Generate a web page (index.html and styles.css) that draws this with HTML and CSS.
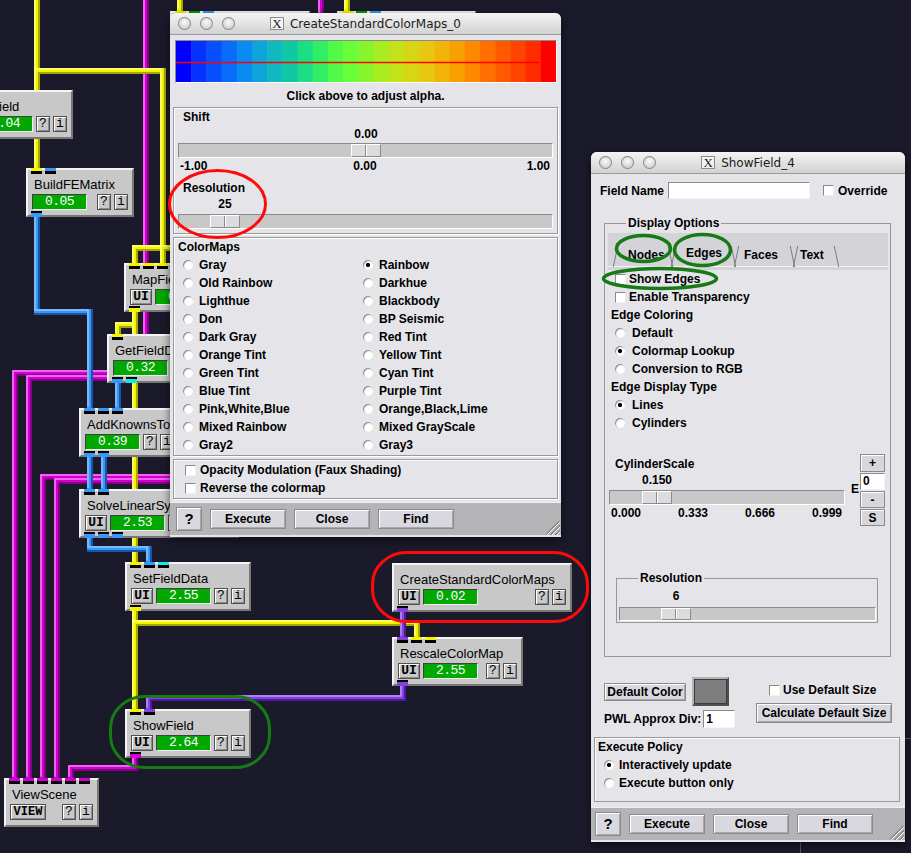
FILE: index.html
```html
<!DOCTYPE html>
<html lang="en">
<head>
<meta charset="utf-8">
<title>SCIRun network</title>
<link rel="stylesheet" href="styles.css">
</head>
<body>
<div class="desk">
<svg class="wires" width="911" height="853" viewBox="0 0 911 853">
  <defs>
    <g id="wm"><path d="M146 0V373H15V778"/><path d="M176 378H29V778"/><path d="M176 477H43V778"/><path d="M176 481H57V778"/><path d="M135 758V768H71V778"/><path d="M321 0V14"/></g>
    <g id="wy"><path d="M37 0V168"/><path d="M37 71H163V264"/><path d="M176 248H135V264"/><path d="M135 313V562"/><path d="M135 325H118V334"/><path d="M135 611V709"/><path d="M135 623H417V637"/><path d="M180 0V11"/><path d="M347 0V11"/></g>
    <g id="wb"><path d="M37 217V312H90V408"/><path d="M118 383V408"/><path d="M90 458V489"/><path d="M104 458V489"/><path d="M90 538V549H149V562"/></g>
    <g id="wp"><path d="M403 612V637"/><path d="M403 686V698H149V709"/></g>
  </defs>
  <g fill="none" stroke-linecap="square" stroke-linejoin="miter">
    <use href="#wm" stroke="#860086" stroke-width="6"/>
    <use href="#wm" stroke="#d000d0" stroke-width="4" transform="translate(-1 -1)"/>
    <use href="#wm" stroke="#ff80ff" stroke-width="1.5" transform="translate(-2 -2)"/>
    <use href="#wy" stroke="#a8a800" stroke-width="6"/>
    <use href="#wy" stroke="#f4f400" stroke-width="4" transform="translate(-1 -1)"/>
    <use href="#wy" stroke="#ffff80" stroke-width="1.5" transform="translate(-2 -2)"/>
    <use href="#wb" stroke="#1358b0" stroke-width="6"/>
    <use href="#wb" stroke="#3a98f4" stroke-width="4" transform="translate(-1 -1)"/>
    <use href="#wb" stroke="#8cc6ff" stroke-width="1.5" transform="translate(-2 -2)"/>
    <use href="#wp" stroke="#5018a0" stroke-width="6"/>
    <use href="#wp" stroke="#8444dc" stroke-width="4" transform="translate(-1 -1)"/>
    <use href="#wp" stroke="#b892ff" stroke-width="1.5" transform="translate(-2 -2)"/>
  </g>
</svg>

<div class="bgwin"></div>

<div class="mod m-top1"><i class="port in pa py"></i><i class="port in pb pg"></i><i class="port in pc pbl"></i></div>
<div class="mod m-top2"><i class="port in pa py"></i><i class="port in pb pg"></i><i class="port in pc pbl"></i></div>

<div class="mod m-read">
  <div class="mname">ReadField</div>
  <div class="mrow"><span class="ui">UI</span><span class="stat">0.04</span><span class="q">?</span><span class="info">i</span></div>
</div>

<div class="mod m-build">
  <div class="mname">BuildFEMatrix</div>
  <div class="mrow"><span class="stat">0.05</span><span class="q push">?</span><span class="info">i</span></div>
  <i class="port in pa py"></i><i class="port in pb pbl"></i>
  <i class="port out pa obl"></i>
</div>

<div class="mod m-map">
  <div class="mname">MapFieldData</div>
  <div class="mrow"><span class="ui">UI</span><span class="stat">0.09</span><span class="q">?</span><span class="info">i</span></div>
  <i class="port in pa py"></i><i class="port in pb py"></i><i class="port in pc py"></i>
  <i class="port out pa oy"></i>
</div>

<div class="mod m-get">
  <div class="mname">GetFieldData</div>
  <div class="mrow"><span class="stat">0.32</span><span class="q">?</span><span class="info">i</span></div>
  <i class="port in pa py"></i>
  <i class="port out pa obl"></i><i class="port out pb ocy"></i>
</div>

<div class="mod m-add">
  <div class="mname">AddKnownsToLinearSystem</div>
  <div class="mrow"><span class="stat">0.39</span><span class="q">?</span><span class="info">i</span></div>
  <i class="port in pa pbl"></i><i class="port in pb pbl"></i><i class="port in pc pbl"></i>
  <i class="port out pa obl"></i><i class="port out pb obl"></i>
</div>

<div class="mod m-solve">
  <div class="mname">SolveLinearSystem</div>
  <div class="mrow"><span class="ui">UI</span><span class="stat">2.53</span><span class="q">?</span><span class="info">i</span></div>
  <i class="port in pa pbl"></i><i class="port in pb pbl"></i>
  <i class="port out pa obl"></i><i class="port out pb obl"></i><i class="port out pc obl"></i>
</div>

<div class="mod m-set">
  <div class="mname">SetFieldData</div>
  <div class="mrow"><span class="ui">UI</span><span class="stat">2.55</span><span class="q">?</span><span class="info">i</span></div>
  <i class="port in pa py"></i><i class="port in pb pbl"></i><i class="port in pc pcy"></i>
  <i class="port out pa oy"></i>
</div>

<div class="mod m-show">
  <div class="mname">ShowField</div>
  <div class="mrow"><span class="ui">UI</span><span class="stat">2.64</span><span class="q">?</span><span class="info">i</span></div>
  <i class="port in pa py"></i><i class="port in pb pp"></i>
  <i class="port out pa om"></i>
</div>

<div class="mod m-view">
  <div class="mname">ViewScene</div>
  <div class="mrow"><span class="ui view">VIEW</span><span class="q push">?</span><span class="info">i</span></div>
  <i class="port in pa pm"></i><i class="port in pb pm"></i><i class="port in pc pm"></i><i class="port in pd pm"></i><i class="port in pe pm"></i><i class="port in pf pm"></i>
</div>

<div class="mod m-cscm">
  <div class="mname">CreateStandardColorMaps</div>
  <div class="mrow"><span class="ui">UI</span><span class="stat">0.02</span><span class="q push">?</span><span class="info">i</span></div>
  <i class="port out pa op"></i>
</div>

<div class="mod m-resc">
  <div class="mname">RescaleColorMap</div>
  <div class="mrow"><span class="ui">UI</span><span class="stat">2.55</span><span class="q push">?</span><span class="info">i</span></div>
  <i class="port in pa pp"></i><i class="port in pb py"></i><i class="port in pc py"></i>
  <i class="port out pa op"></i>
</div>

<!-- CreateStandardColorMaps window -->
<div class="win w-cscm">
  <div class="tbar">
    <div class="lights"><i></i><i></i><i></i></div>
    <div class="ttl"><span class="xi">X</span>CreateStandardColorMaps_0</div>
    <div></div>
  </div>
  <div class="cbar">
    <svg width="380" height="41" viewBox="0 0 380 41">
      <rect x="0" y="0" width="15.7" height="41" fill="#0000ff"/>
      <rect x="15.2" y="0" width="15.7" height="41" fill="#0632ff"/>
      <rect x="30.4" y="0" width="15.7" height="41" fill="#0850ff"/>
      <rect x="45.6" y="0" width="15.7" height="41" fill="#0a6cfa"/>
      <rect x="60.8" y="0" width="15.7" height="41" fill="#0a8cf2"/>
      <rect x="76" y="0" width="15.7" height="41" fill="#0ea6da"/>
      <rect x="91.2" y="0" width="15.7" height="41" fill="#10b8c0"/>
      <rect x="106.4" y="0" width="15.7" height="41" fill="#12c8a4"/>
      <rect x="121.6" y="0" width="15.7" height="41" fill="#1cde84"/>
      <rect x="136.8" y="0" width="15.7" height="41" fill="#32ee64"/>
      <rect x="152" y="0" width="15.7" height="41" fill="#50fa46"/>
      <rect x="167.2" y="0" width="15.7" height="41" fill="#68ff38"/>
      <rect x="182.4" y="0" width="15.7" height="41" fill="#88f52c"/>
      <rect x="197.6" y="0" width="15.7" height="41" fill="#a8ec22"/>
      <rect x="212.8" y="0" width="15.7" height="41" fill="#c4e21a"/>
      <rect x="228" y="0" width="15.7" height="41" fill="#d6d612"/>
      <rect x="243.2" y="0" width="15.7" height="41" fill="#e6c80e"/>
      <rect x="258.4" y="0" width="15.7" height="41" fill="#f2b408"/>
      <rect x="273.6" y="0" width="15.7" height="41" fill="#f8a000"/>
      <rect x="288.8" y="0" width="15.7" height="41" fill="#ff8800"/>
      <rect x="304" y="0" width="15.7" height="41" fill="#ff7000"/>
      <rect x="319.2" y="0" width="15.7" height="41" fill="#ff5a00"/>
      <rect x="334.4" y="0" width="15.7" height="41" fill="#ff4400"/>
      <rect x="349.6" y="0" width="15.7" height="41" fill="#ff2c00"/>
      <rect x="364.8" y="0" width="15.7" height="41" fill="#ff0000"/>
      <line x1="0" y1="21.5" x2="363" y2="21.5" stroke="#ff0000" stroke-width="1.5"/>
    </svg>
  </div>
  <div class="caption">Click above to adjust alpha.</div>
  <div class="frame f1">
    <div class="lbl l-ind">Shift</div>
    <div class="val v-shift">0.00</div>
    <div class="trough"><span class="thumb t-shift"></span></div>
    <div class="ticks3"><span>-1.00</span><span>0.00</span><span>1.00</span></div>
    <div class="lbl l-ind l-res">Resolution</div>
    <div class="val v-res">25</div>
    <div class="trough t-gap"><span class="thumb t-res"></span></div>
  </div>
  <div class="frame f2">
    <div class="lbl">ColorMaps</div>
    <div class="maps">
      <div class="ri"><i class="rb"></i>Gray</div>
      <div class="ri"><i class="rb"></i>Old Rainbow</div>
      <div class="ri"><i class="rb"></i>Lighthue</div>
      <div class="ri"><i class="rb"></i>Don</div>
      <div class="ri"><i class="rb"></i>Dark Gray</div>
      <div class="ri"><i class="rb"></i>Orange Tint</div>
      <div class="ri"><i class="rb"></i>Green Tint</div>
      <div class="ri"><i class="rb"></i>Blue Tint</div>
      <div class="ri"><i class="rb"></i>Pink,White,Blue</div>
      <div class="ri"><i class="rb"></i>Mixed Rainbow</div>
      <div class="ri"><i class="rb"></i>Gray2</div>
      <div class="ri"><i class="rb on"></i>Rainbow</div>
      <div class="ri"><i class="rb"></i>Darkhue</div>
      <div class="ri"><i class="rb"></i>Blackbody</div>
      <div class="ri"><i class="rb"></i>BP Seismic</div>
      <div class="ri"><i class="rb"></i>Red Tint</div>
      <div class="ri"><i class="rb"></i>Yellow Tint</div>
      <div class="ri"><i class="rb"></i>Cyan Tint</div>
      <div class="ri"><i class="rb"></i>Purple Tint</div>
      <div class="ri"><i class="rb"></i>Orange,Black,Lime</div>
      <div class="ri"><i class="rb"></i>Mixed GrayScale</div>
      <div class="ri"><i class="rb"></i>Gray3</div>
    </div>
  </div>
  <div class="frame f3">
    <div class="ci"><i class="chk"></i>Opacity Modulation (Faux Shading)</div>
    <div class="ci"><i class="chk"></i>Reverse the colormap</div>
  </div>
  <div class="bbar">
    <span class="btn qb">?</span><span class="btn wb">Execute</span><span class="btn wb">Close</span><span class="btn wb">Find</span>
  </div>
  <span class="grip"></span>
</div>

<!-- ShowField window -->
<div class="win w-sf">
  <div class="tbar">
    <div class="lights"><i></i><i></i><i></i></div>
    <div class="ttl"><span class="xi">X</span>ShowField_4</div>
    <div></div>
  </div>
  <div class="fnrow">
    <span>Field Name</span><span class="entry fn"></span><i class="chk ov"></i><span class="ovl">Override</span>
  </div>
  <fieldset class="dopt">
    <legend>Display Options</legend>
    <div class="tabs">
      <span class="tab t-nodes">Nodes</span><span class="tab t-edges">Edges</span><span class="tab t-faces">Faces</span><span class="tab t-text">Text</span>
    </div>
    <div class="cbrow"><i class="chk"></i><span>Show Edges</span></div>
    <div class="cbrow"><i class="chk"></i><span>Enable Transparency</span></div>
    <div class="hd">Edge Coloring</div>
    <div class="rbrow"><i class="rb"></i><span>Default</span></div>
    <div class="rbrow"><i class="rb on"></i><span>Colormap Lookup</span></div>
    <div class="rbrow"><i class="rb"></i><span>Conversion to RGB</span></div>
    <div class="hd">Edge Display Type</div>
    <div class="rbrow"><i class="rb on"></i><span>Lines</span></div>
    <div class="rbrow"><i class="rb"></i><span>Cylinders</span></div>
    <div class="cyl">
      <div class="cyl-l">
        <div class="lbl c-lbl">CylinderScale</div>
        <div class="val v-cyl">0.150</div>
        <div class="trough c-tr"><span class="thumb t-cyl"></span></div>
        <div class="ticks4"><span>0.000</span><span>0.333</span><span>0.666</span><span>0.999</span></div>
      </div>
      <span class="eee">E</span>
      <div class="cbtns">
        <span class="sb plus">+</span><span class="entry ce">0</span><span class="sb">-</span><span class="sb">S</span>
      </div>
    </div>
    <fieldset class="resf">
      <legend>Resolution</legend>
      <div class="val v-six">6</div>
      <div class="trough r-tr"><span class="thumb t-six"></span></div>
    </fieldset>
  </fieldset>
  <div class="dc">
    <div class="dc-l">
      <div class="dc-r1"><span class="btn dcb">Default Color</span><span class="swatch"></span></div>
      <div class="dc-r2"><span>PWL Approx Div:</span><span class="entry pwl">1</span></div>
    </div>
    <div class="dc-rt">
      <div class="uds"><i class="chk"></i><span>Use Default Size</span></div>
      <span class="btn calc">Calculate Default Size</span>
    </div>
  </div>
  <div class="pol">
    <div class="lbl">Execute Policy</div>
    <div class="prow"><i class="rb on"></i><span>Interactively update</span></div>
    <div class="prow"><i class="rb"></i><span>Execute button only</span></div>
  </div>
  <div class="bbar sfbar">
    <span class="btn qb">?</span><span class="btn wb">Execute</span><span class="btn wb">Close</span><span class="btn wb">Find</span>
  </div>
  <span class="grip"></span>
</div>

<svg class="marks" width="911" height="853" viewBox="0 0 911 853">
  <g fill="none">
    <ellipse cx="217.5" cy="204" rx="48" ry="33.5" stroke="#ff0a0a" stroke-width="3"/>
    <rect x="372.5" y="552.5" width="215" height="69" rx="34" ry="32" stroke="#ff0a0a" stroke-width="3"/>
    <rect x="110.5" y="696.5" width="159" height="71" rx="34" ry="32" stroke="#167a16" stroke-width="3"/>
    <ellipse cx="643.5" cy="248.5" rx="27" ry="13" stroke="#167a16" stroke-width="3.5"/>
    <ellipse cx="702.5" cy="250" rx="28" ry="15.5" stroke="#167a16" stroke-width="3.5"/>
    <ellipse cx="660" cy="278.5" rx="56.5" ry="10" stroke="#167a16" stroke-width="3.5"/>
  </g>
</svg>
</div>
</body>
</html>
```

FILE: styles.css
```css
* { box-sizing: border-box; margin: 0; padding: 0; }
html, body { width: 911px; height: 853px; overflow: hidden; }
body { background: #1b1a2b; font-family: "Liberation Sans", Arial, sans-serif; color: #000; }
.desk { position: relative; width: 911px; height: 853px; overflow: hidden; background: #1b1a2b; }
.wires { position: absolute; left: 0; top: 0; z-index: 0; }
.marks { position: absolute; left: 0; top: 0; z-index: 5; pointer-events: none; }
.bgwin { position: absolute; left: 800px; top: 738px; width: 200px; height: 200px; border: 1px solid #55556a; z-index: 0; }

/* network modules */
.mod { position: absolute; z-index: 1; height: 49px; background: #c8c8c8; border: 2px solid; border-color: #f4f4f4 #787878 #787878 #f4f4f4; padding: 7px 4px 0 4px; }
.mname { font-size: 13px; line-height: 15px; padding-left: 2px; white-space: nowrap; }
.mrow { display: flex; gap: 3px; margin-top: 2px; height: 16px; }
.ui, .q, .info { height: 16px; background: #c8c8c8; border: 1px solid #505050; box-shadow: inset 1px 1px 0 #fff, inset -1px -1px 0 #8c8c8c; font: bold 13px/14px "Liberation Mono", monospace; text-align: center; color: #000; flex: none; }
.ui { width: 22px; }
.ui.view { width: 36px; font-size: 12px; }
.q, .info { width: 14px; font-weight: normal; }
.stat { width: 55px; height: 16px; flex: none; background: #00a800; border: 1px solid; border-color: #404040 #f0f0f0 #f0f0f0 #404040; color: #fff; font: 13px/14px "Liberation Mono", monospace; text-align: center; letter-spacing: -0.5px; }
.push { margin-left: auto; }
.port { position: absolute; width: 11px; height: 6px; }
.port.in { top: -2px; }
.port.out { bottom: -2px; }
.pa { left: 3px; } .pb { left: 17px; } .pc { left: 31px; } .pd { left: 45px; } .pe { left: 59px; } .pf { left: 73px; }
.py { background: linear-gradient(#f4f400 0 3px, #000 3px); }
.pbl { background: linear-gradient(#3a98f4 0 3px, #000 3px); }
.pcy { background: linear-gradient(#10e8f0 0 3px, #000 3px); }
.pm { background: linear-gradient(#d000d0 0 3px, #000 3px); }
.pp { background: linear-gradient(#8444dc 0 3px, #000 3px); }
.pg { background: linear-gradient(#00a000 0 3px, #000 3px); }
.oy { background: linear-gradient(#000 0 2px, #f4f400 2px); }
.obl { background: linear-gradient(#000 0 2px, #3a98f4 2px); }
.ocy { background: linear-gradient(#000 0 2px, #10e8f0 2px); }
.om { background: linear-gradient(#000 0 2px, #d000d0 2px); }
.op { background: linear-gradient(#000 0 2px, #8444dc 2px); }

.m-top1 { left: 170px; top: 11px; width: 140px; }
.m-top2 { left: 337px; top: 11px; width: 139px; }
.m-read { left: -53px; top: 90px; width: 126px; }
.m-read .mname { padding-left: 7px; }
.m-build { left: 26px; top: 168px; width: 108px; }
.m-map { left: 124px; top: 263px; width: 126px; }
.m-get { left: 107px; top: 334px; width: 126px; }
.m-add { left: 79px; top: 408px; width: 180px; }
.m-solve { left: 79px; top: 489px; width: 160px; }
.m-set { left: 125px; top: 562px; width: 126px; }
.m-show { left: 125px; top: 709px; width: 126px; }
.m-view { left: 4px; top: 778px; width: 95px; }
.m-cscm { left: 392px; top: 563px; width: 180px; }
.m-resc { left: 392px; top: 637px; width: 131px; }

/* windows */
.win { position: absolute; z-index: 2; background: #e5e5e9; border-radius: 6px 6px 0 0; box-shadow: 0 3px 8px rgba(0,0,0,0.6); overflow: hidden; font: bold 12px/14px "Liberation Sans", Arial, sans-serif; }
.w-cscm { left: 170px; top: 13px; width: 391px; height: 524px; }
.w-sf { left: 591px; top: 152px; width: 314px; height: 690px; }
.tbar { height: 22px; display: grid; grid-template-columns: 1fr auto 1fr; align-items: center; background: linear-gradient(#f4f4f4, #d2d2d2); border-bottom: 1px solid #9a9a9a; }
.lights { display: flex; gap: 9px; padding-left: 8px; }
.lights i { display: block; width: 13px; height: 13px; border-radius: 50%; background: radial-gradient(circle at 50% 40%, #fbfbfb 0, #d6d6d6 55%, #a6a6a6 100%); box-shadow: inset 0 0 0 1px #8c8c8c; }
.ttl { display: flex; align-items: center; font: 12px/14px "DejaVu Sans", sans-serif; color: #1c1c1c; white-space: nowrap; }
.xi { display: inline-block; width: 14px; height: 13px; border: 1px solid #8c8c8c; background: #f2f2f2; font: 13px/11px "Liberation Serif", serif; text-align: center; margin-right: 6px; color: #222; }

.cbar { margin: 5px 0 0 5px; width: 382px; height: 43px; border: 1px solid; border-color: #8a8a8a #fff #fff #8a8a8a; }
.cbar svg { display: block; }
.caption { margin-top: 6px; text-align: center; }
.frame { margin: 4px 3px 0; border: 1px solid #9a9a9a; box-shadow: inset 1px 1px 0 #fff, 1px 1px 0 #fff; }
.f1 { padding: 2px 4px 4px; }
.f2 { margin-top: 3px; padding: 2px 4px 1px; }
.f3 { margin-top: 3px; padding: 1px 4px 1px; }
.l-ind { padding-left: 5px; }
.l-res { margin-top: 8px; }
.val { width: 30px; display: flex; justify-content: center; white-space: nowrap; margin-top: 3px; }
.v-shift { margin-left: 173px; }
.v-res { margin-left: 32px; margin-top: 2px; }
.trough { height: 15px; margin-top: 2px; background: #c8c8c8; border: 1px solid; border-color: #8a8a8a #fff #fff #8a8a8a; }
.t-gap { margin-top: 3px; }
.thumb { display: block; width: 30px; height: 100%; border: 1px solid; border-color: #fff #8a8a8a #8a8a8a #fff; background: linear-gradient(to right, transparent 13px, #8a8a8a 13px 14px, #fff 14px 15px, transparent 15px), #dcdcdf; }
.t-shift { margin-left: 172px; }
.t-res { margin-left: 31px; }
.ticks3 { display: grid; grid-template-columns: 1fr auto 1fr; margin-top: 1px; padding: 0 3px 0 2px; }
.ticks3 span:last-child { justify-self: end; }
.maps { display: grid; grid-template-columns: 180px 180px; grid-template-rows: repeat(11, 18px); grid-auto-flow: column; margin: 2px 0 0 5px; }
.ri { display: flex; align-items: center; gap: 6px; white-space: nowrap; }
.rb { display: block; flex: none; width: 10px; height: 10px; border-radius: 50%; background: #fff; box-shadow: inset 1px 1px 1px #8a8a8a; }
.rb.on { background: radial-gradient(circle, #000 0 1.8px, #fff 2.4px); }
.chk { display: block; flex: none; width: 11px; height: 11px; background: #fff; border: 1px solid; border-color: #8a8a8a #f0f0f0 #f0f0f0 #8a8a8a; }
.ci { display: flex; align-items: center; gap: 4px; height: 18px; padding-left: 7px; }

.bbar { margin-top: 3px; height: 33px; background: #b4b4b6; border-top: 1px solid #f0f0f0; display: flex; align-items: center; gap: 8px; padding-left: 6px; }
.btn { display: flex; align-items: center; justify-content: center; background: #d8d8de; border: 1px solid #8a8a8a; box-shadow: inset 1px 1px 0 #fff, inset -1px -1px 0 #a8a8ac; white-space: nowrap; }
.qb { width: 26px; height: 24px; font-size: 15px; }
.wb { width: 76px; height: 20px; }
.grip { position: absolute; right: 1px; bottom: 2px; width: 14px; height: 14px; background: linear-gradient(135deg, transparent 0 46%, #8a8a8a 46% 51%, #fff 51% 56%, transparent 56% 64%, #8a8a8a 64% 69%, #fff 69% 74%, transparent 74% 82%, #8a8a8a 82% 87%, #fff 87% 92%, transparent 92%); }

/* ShowField window */
.fnrow { display: flex; align-items: center; height: 17px; margin-top: 8px; padding-left: 9px; white-space: nowrap; }
.entry { display: block; background: #fff; border: 1px solid; border-color: #8a8a8a #f4f4f4 #f4f4f4 #8a8a8a; }
.fn { width: 142px; height: 17px; margin-left: 4px; }
.ov { margin-left: 13px; }
.ovl { margin-left: 4px; }
fieldset { min-width: 0; }
legend { padding: 0 2px; line-height: 14px; font-weight: bold; }
.dopt { margin: 17px 0 0 13px; width: 287px; padding: 0 0 33px; border: 1px solid #989898; }
.dopt > legend { margin-left: 21px; }
.tabs { display: flex; align-items: flex-end; margin: 3px 0 0 3px; width: 280px; height: 37px; padding: 0 0 3px 6px; background: linear-gradient(to top, transparent 3px, #f2f2f2 3px, #f2f2f2 4px, transparent 4px), #d4d4d8; }
.tab { position: relative; height: 24px; padding-top: 5px; line-height: 14px; white-space: nowrap; }
.tab::before, .tab::after { content: ""; position: absolute; top: 3px; bottom: 0; width: 1px; background: #7c7c7c; }
.tab::before { left: 1px; transform: skewX(-12deg); }
.tab::after { right: 1px; transform: skewX(12deg); }
.t-nodes { width: 58px; padding-left: 14px; }
.t-edges { width: 63px; padding-left: 14px; padding-top: 3px; }
.t-faces { width: 59px; padding-left: 9px; }
.t-text { width: 44px; padding-left: 6px; }
.cbrow { display: flex; align-items: center; gap: 3px; height: 18px; padding-left: 10px; }
.rbrow { display: flex; align-items: center; gap: 7px; height: 18px; padding-left: 10px; }
.hd { height: 18px; line-height: 18px; padding-left: 6px; }
.cyl { display: flex; margin-top: 22px; }
.cyl-l { width: 236px; margin-left: 4px; flex: none; }
.c-lbl { margin-top: 3px; padding-left: 6px; }
.v-cyl { margin: 2px 0 0 33px; }
.c-tr { margin-top: 3px; }
.t-cyl { margin-left: 32px; }
.ticks4 { display: flex; justify-content: space-between; margin-top: 1px; padding: 0 3px 0 2px; }
.eee { margin: 28px 0 0 6px; width: 8px; height: 14px; }
.cbtns { display: flex; flex-direction: column; gap: 1px; margin-left: 1px; width: 25px; }
.sb { display: flex; align-items: center; justify-content: center; height: 17px; background: #d6d6dc; border: 1px solid #8a8a8a; box-shadow: inset 1px 1px 0 #fff; }
.sb.plus { height: 18px; }
.ce { height: 17px; padding-left: 2px; line-height: 15px; }
.resf { margin: 45px 0 0 11px; width: 262px; padding: 0 0 1px; border: 1px solid #989898; }
.resf > legend { margin-left: 21px; }
.v-six { margin: 4px 0 0 44px; }
.r-tr { height: 14px; margin: 4px 0 0 2px; width: 257px; }
.t-six { margin-left: 41px; }
.dc { display: flex; margin-top: 20px; padding-left: 13px; }
.dc-l { width: 132px; flex: none; }
.dc-r1 { display: flex; align-items: center; height: 29px; }
.dcb { width: 82px; height: 18px; }
.swatch { display: block; width: 37px; height: 29px; margin-left: 6px; background: #7e7e7e; border: 2px solid; border-color: #b4b4b4 #505050 #505050 #b4b4b4; box-shadow: inset 0 0 0 1px #3c3c3c; }
.dc-r2 { display: flex; align-items: center; height: 18px; margin-top: 4px; white-space: nowrap; }
.pwl { width: 32px; height: 18px; margin-left: 2px; padding-left: 2px; line-height: 16px; }
.dc-rt { margin-left: 20px; width: 136px; }
.uds { display: flex; align-items: center; gap: 3px; height: 26px; padding-left: 13px; white-space: nowrap; }
.calc { width: 136px; height: 20px; }
.pol { margin: 9px 0 0 3px; width: 306px; height: 65px; border: 1px solid #9a9a9a; box-shadow: inset 1px 1px 0 #fff; padding: 2px 0 0 3px; }
.prow { display: flex; align-items: center; gap: 5px; height: 18px; padding-left: 6px; }
.pol .lbl + .prow { margin-top: 2px; }
.sfbar { margin-top: 5px; padding-left: 4px; }
```
